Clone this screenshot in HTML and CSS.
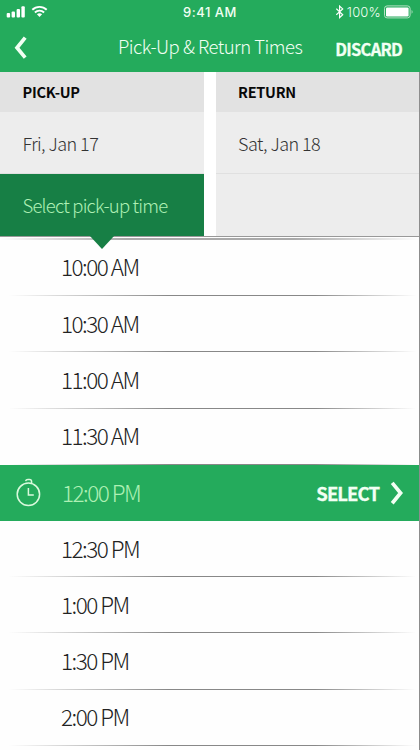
FILE: index.html
```html
<!DOCTYPE html>
<html lang="en">
<head>
<meta charset="utf-8">
<title>Pick-Up &amp; Return Times</title>
<link rel="stylesheet" href="styles.css">
</head>
<body>
<div class="screen">
  <header class="header">
    <div class="status">
      <svg class="signal" width="48" height="14" viewBox="0 0 48 14" fill="#fff">
        <rect x="0.7" y="8" width="3.4" height="4.5" rx="1"/>
        <rect x="5.6" y="6.4" width="3.4" height="6.1" rx="1"/>
        <rect x="10.6" y="4" width="3.4" height="8.5" rx="1"/>
        <rect x="15.4" y="1.3" width="3.4" height="11.2" rx="1"/>
        <g fill="none" stroke="#fff" stroke-width="1.9">
          <path d="M26.3 4.8a10.4 10.4 0 0 1 14.4 0"/>
          <path d="M28.9 7.5a6.6 6.6 0 0 1 9.2 0"/>
        </g>
        <path d="M30.9 9.2a4.1 4.1 0 0 1 5.2 0l-2.6 2.7z"/>
      </svg>
      <span class="clock">9:41 AM</span>
      <div class="power">
        <svg width="10" height="14" viewBox="0 0 10 14" fill="none" stroke="#fff" stroke-width="1.2"><path d="M0.3 3.8l6.4 6L3.6 12.6V1.1l3.1 2.8-6.4 6"/></svg>
        <span class="percent">100%</span>
        <svg width="30" height="14" viewBox="0 0 30 14"><rect x="0.5" y="0.9" width="25.6" height="12" rx="2.6" fill="none" stroke="#b4e0c3" stroke-width="1"/><rect x="2" y="2.4" width="22.6" height="9" rx="1.2" fill="#fff"/><path d="M27.6 5v3.8c1.3-.7 1.3-3.1 0-3.8z" fill="#b4e0c3"/></svg>
      </div>
    </div>
    <nav class="nav">
      <svg class="back" width="16" height="24" viewBox="0 0 16 24" fill="none" stroke="#f2fff3" stroke-width="3.7"><path d="M13.2 1.6L5 11.8l8.2 9.8"/></svg>
      <h1 class="title">Pick-Up &amp; Return Times</h1>
      <span class="discard">DISCARD</span>
    </nav>
  </header>
  <section class="trip">
    <div class="column">
      <h2 class="label">PICK-UP</h2>
      <div class="date">Fri, Jan 17</div>
      <div class="time active">Select pick-up time</div>
    </div>
    <div class="column">
      <h2 class="label">RETURN</h2>
      <div class="date">Sat, Jan 18</div>
      <div class="time"></div>
    </div>
  </section>
  <ul class="times">
    <li class="row"><span class="hour">10:00 AM</span></li>
    <li class="row"><span class="hour">10:30 AM</span></li>
    <li class="row"><span class="hour">11:00 AM</span></li>
    <li class="row"><span class="hour">11:30 AM</span></li>
    <li class="row selected">
      <svg class="watch" width="26" height="30" viewBox="0 0 26 30" fill="none" stroke="#d9f9dc" stroke-width="1.5"><circle cx="12.4" cy="16.3" r="11.2"/><path d="M12.4 10v7.1h5.4M9.6 3.1c.3-1.2 1.1-1.6 2.3-1.6h1.6c1.4 0 2.1.8 2.1 2.2v1.3"/></svg>
      <span class="hour">12:00 PM</span>
      <span class="select">SELECT</span>
      <svg class="next" width="14" height="24" viewBox="0 0 14 24" fill="none" stroke="#f2fff3" stroke-width="3.7"><path d="M2.2 1.9L10.6 12 2.2 22.2"/></svg>
    </li>
    <li class="row"><span class="hour">12:30 PM</span></li>
    <li class="row"><span class="hour">1:00 PM</span></li>
    <li class="row"><span class="hour">1:30 PM</span></li>
    <li class="row"><span class="hour">2:00 PM</span></li>
  </ul>
</div>
</body>
</html>
```
FILE: styles.css
```css
* { box-sizing: border-box; margin: 0; padding: 0; }
body { background: #fff; font-family: "Noto Sans CJK SC", "Open Sans", sans-serif; }
.screen { position: relative; width: 420px; height: 750px; overflow: hidden; background: #fefefe; }
.screen::after { content: ""; position: absolute; top: 72px; right: 0; bottom: 0; width: 1px; background: #8d8d8d; }
svg { display: block; flex: none; }

.header { height: 72px; background: #24ab5c; color: #f2fff3; }
.status { display: grid; grid-template-columns: 1fr auto 1fr; align-items: center; height: 24px; padding: 0 6px; font-family: Inter, "Liberation Sans", sans-serif; font-size: 13px; line-height: 24px; }
.clock { font-weight: 500; letter-spacing: 0.5px; }
.power { display: flex; align-items: center; justify-content: flex-end; }
.percent { margin: 0 3px 0 1px; font-size: 13px; font-weight: 300; letter-spacing: 0.2px; }
.nav { display: flex; align-items: center; height: 47px; padding: 0 18px 0 12px; }
.title { margin-left: 90px; padding-bottom: 3px; font-size: 18.5px; font-weight: 300; line-height: 44px; letter-spacing: -0.5px; white-space: nowrap; }
.discard { margin-left: auto; padding-top: 2px; font-size: 16.5px; font-weight: 700; letter-spacing: -0.75px; -webkit-text-stroke: 0.3px; }

.trip { display: grid; grid-template-columns: 204px 204.5px; gap: 11.5px; height: 165px; background: #fff; border-bottom: 1px solid #999; }
.column { display: grid; grid-template-rows: 40px 62px 62px; background: #ededed; }
.label { padding-left: 22.5px; background: #e2e2e2; font-size: 14.5px; font-weight: 700; line-height: 40px; letter-spacing: -0.25px; color: #080808; }
.date { padding-left: 22.5px; border-bottom: 1px solid #e0e0e0; font-size: 18px; font-weight: 300; line-height: 62px; letter-spacing: -0.55px; color: #333; }
.time { position: relative; padding-left: 22.5px; font-size: 18.5px; font-weight: 300; line-height: 63px; letter-spacing: -0.78px; white-space: nowrap; }
.active { background: #177f45; color: #aef0b4; }
.active::after { content: ""; position: absolute; left: 89px; top: 61px; border: solid transparent; border-width: 14px 13px 0; border-top-color: #177f45; }

.times { list-style: none; padding-top: 1px; background: linear-gradient(90deg, #fff, #aaa 30%, #aaa 70%, #fff) 0 1px / 100% 2px no-repeat; }
.row { display: flex; align-items: center; height: 56.2px; padding: 0 15px 3px 61px; background: linear-gradient(90deg, transparent 2%, #888 40%, #888 75%, transparent 99%) 0 100% / 100% 1px no-repeat; color: #222; }
.times .row:first-child { height: 58.2px; }
.hour { font-size: 22.5px; font-weight: 300; line-height: 30px; letter-spacing: -1.5px; white-space: nowrap; }
.times .selected { padding: 0 16px 0 16px; background: #24ab5c; color: #aef0b4; }
.selected .hour { margin-left: 20px; padding-bottom: 1px; }
.select { margin-left: auto; font-size: 18.5px; font-weight: 700; letter-spacing: -0.95px; color: #f2fff3; -webkit-text-stroke: 0.3px; }
.next { margin-left: 11px; }
```
